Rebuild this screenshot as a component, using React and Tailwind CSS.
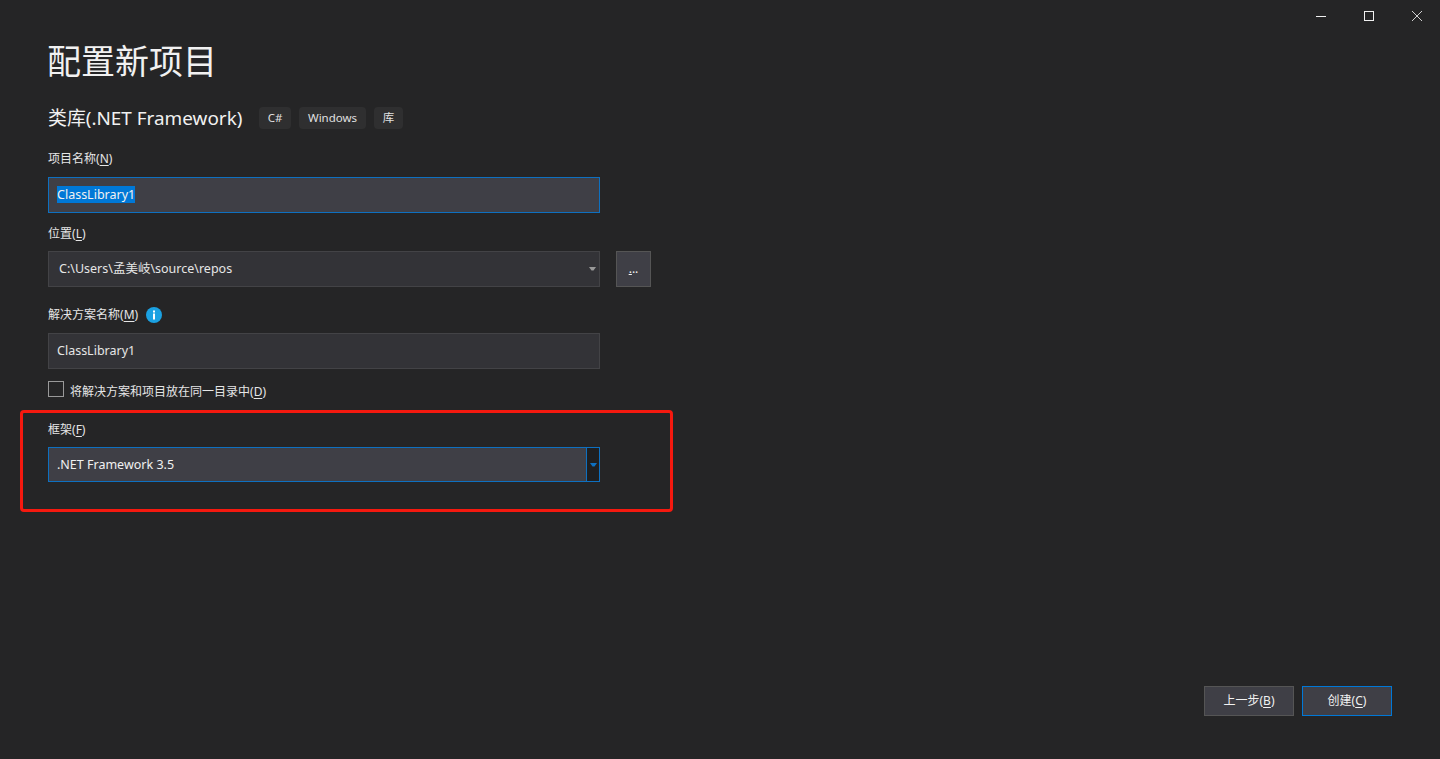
import React from "react";

const font = "font-['Noto_Sans','Noto_Sans_CJK_SC',sans-serif]";

function Label({ text, hotkey }) {
  return (
    <span className="text-[12px] leading-[18px] text-[#e6e6e6]">
      {text}(<span className="underline underline-offset-2">{hotkey}</span>)
    </span>
  );
}

function Tag({ children, w }) {
  return (
    <span className={`flex h-[22px] items-center justify-center rounded-[4px] bg-[#2f2f30] text-[11.5px] text-[#e0e0e0] ${w}`}>
      {children}
    </span>
  );
}

function Arrow({ color }) {
  return (
    <svg width="7" height="4" viewBox="0 0 7 4">
      <path d="M0 0h7L4.5 3.5h-2z" fill={color} />
    </svg>
  );
}

export default function App() {
  return (
    <div className={`relative h-[759px] w-[1440px] overflow-hidden bg-[#252526] ${font}`}>
      {/* window buttons */}
      <div className="flex h-[32px] justify-end">
        <div className="flex h-[32px] w-[48px] items-center justify-center pl-[2px]">
          <svg width="10" height="10" viewBox="0 0 10 10"><path d="M0 5.5h10" stroke="#f0f0f0" /></svg>
        </div>
        <div className="flex h-[32px] w-[48px] items-center justify-center pl-[2px]">
          <svg width="10" height="10" viewBox="0 0 10 10"><rect x="0.5" y="0.5" width="9" height="9" fill="none" stroke="#f0f0f0" /></svg>
        </div>
        <div className="flex h-[32px] w-[48px] items-center justify-center pl-[2px]">
          <svg width="10" height="10" viewBox="0 0 10 10"><path d="M0 0l10 10M10 0L0 10" stroke="#d0d0d0" /></svg>
        </div>
      </div>

      <div className="pl-[48px]">
        <h1 className="mt-[6px] -ml-[1px] h-[46px] text-[34px] leading-[46px] font-normal text-[#f1f1f1]">配置新项目</h1>

        <div className="mt-[22px] flex h-[24px] items-center">
          <span className="w-[211px] text-[18.9px] whitespace-nowrap text-[#f1f1f1]">类库(.NET Framework)</span>
          <div className="flex gap-[8px]">
            <Tag w="w-[32px]">C#</Tag>
            <Tag w="w-[67px]">Windows</Tag>
            <Tag w="w-[29px]">库</Tag>
          </div>
        </div>

        <div className="mt-[20px] flex h-[18px] items-center"><Label text="项目名称" hotkey="N" /></div>
        <div className="mt-[9px] flex h-[36px] w-[552px] items-center border border-[#0e70c0] bg-[#3f3f46] pb-[1px] pl-[8px] text-[12.5px] text-[#f1f1f1]">
          <span className="bg-[#0078d7] leading-[17px]">ClassLibrary1</span>
        </div>

        <div className="mt-[12px] flex h-[18px] items-center"><Label text="位置" hotkey="L" /></div>
        <div className="mt-[8px] flex gap-[16px]">
          <div className="flex h-[36px] w-[552px] items-center justify-between border border-[#434346] bg-[#333337] pr-[3px] pl-[10px] text-[12.5px] text-[#e6e6e6]">
            <span>C:\Users\孟美岐\source\repos</span>
            <Arrow color="#999999" />
          </div>
          <div className="flex h-[36px] w-[35px] items-center justify-center border border-[#555555] bg-[#3f3f46] text-[12px] leading-[12px] text-[#f1f1f1]">
            <span><span className="underline">.</span>..</span>
          </div>
        </div>

        <div className="mt-[19px] flex h-[18px] items-center gap-[8px]">
          <Label text="解决方案名称" hotkey="M" />
          <svg width="16" height="16" viewBox="0 0 16 16">
            <circle cx="8" cy="8" r="8" fill="#1ba1e2" />
            <rect x="7" y="6.5" width="2" height="6" fill="#fff" />
            <rect x="7" y="3.5" width="2" height="2" fill="#fff" />
          </svg>
        </div>
        <div className="mt-[9px] flex h-[36px] w-[552px] items-center border border-[#434346] bg-[#333337] pl-[8px] text-[12.5px] text-[#e6e6e6]">
          ClassLibrary1
        </div>

        <div className="mt-[12px] flex h-[16px] items-center gap-[6px]">
          <div className="h-[16px] w-[16px] border border-[#999999]" />
          <span className="mt-[1px]"><Label text="将解决方案和项目放在同一目录中" hotkey="D" /></span>
        </div>

        <div className="mt-[24px] flex h-[18px] items-center"><Label text="框架" hotkey="F" /></div>
        <div className="mt-[8px] flex h-[35px] w-[552px] border border-[#0e70c0] bg-[#3f3f46] text-[12.5px] text-[#f1f1f1]">
          <span className="flex flex-1 items-center pt-[1px] pl-[8px]">.NET Framework 3.5</span>
          <span className="flex w-[13px] items-center justify-center border-l border-[#0e70c0] bg-[#1f1f20]">
            <Arrow color="#0e70c0" />
          </span>
        </div>
      </div>

      {/* footer buttons */}
      <div className="mt-[204px] flex justify-end gap-[8px] pr-[48px]">
        <div className="flex h-[30px] w-[90px] items-center justify-center border border-[#555555] bg-[#3f3f46] text-[12px] text-[#f1f1f1]">
          <span>上一步(<span className="underline underline-offset-2">B</span>)</span>
        </div>
        <div className="flex h-[30px] w-[90px] items-center justify-center border border-[#0078d7] bg-[#3f3f46] text-[12px] text-[#f1f1f1]">
          <span>创建(<span className="underline underline-offset-2">C</span>)</span>
        </div>
      </div>

      {/* red annotation */}
      <div className="absolute top-[410px] left-[20px] h-[102px] w-[653px] rounded-[4px] border-[3px] border-[#f5190f]" />
    </div>
  );
}
